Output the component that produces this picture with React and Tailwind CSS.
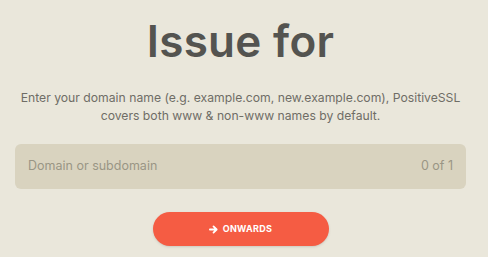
import React from 'react';

const App = () => {
    return (
        <div className="w-[488px] h-[257px] overflow-hidden bg-[#eae7db] font-['Inter','Liberation_Sans',sans-serif]">
            <div className="w-[481px] flex flex-col items-center">
                <h1 className="mt-[14px] text-[44px] leading-[54px] font-semibold text-[#545450] tracking-[0.3px]">Issue for</h1>

                <p className="mt-[21px] text-center text-[12.2px] leading-[18px] text-[#6f6d66]">
                    Enter your domain name (e.g. example.com, new.example.com), PositiveSSL<br />
                    covers both www &amp; non-www names by default.
                </p>

                <div className="mt-[19px] w-[451px] h-[45px] rounded-[6px] bg-[#d9d3bf] flex items-center justify-between px-[13px] text-[12.5px] text-[#9a9685]">
                    <span>Domain or subdomain</span>
                    <span>0 of 1</span>
                </div>

                <button className="mt-[23px] w-[176px] h-[34px] rounded-full bg-[#f55c43] shadow-sm flex items-center justify-center gap-[5px] text-white text-[9px] font-bold tracking-[0.3px]">
                    <svg width="9" height="9" viewBox="0 0 10 10" fill="none" stroke="white" strokeWidth="2" strokeLinecap="round" strokeLinejoin="round">
                        <path d="M1 5h7M5 1.5 8.5 5 5 8.5" />
                    </svg>
                    ONWARDS
                </button>
            </div>
        </div>
    );
};

export default App;
